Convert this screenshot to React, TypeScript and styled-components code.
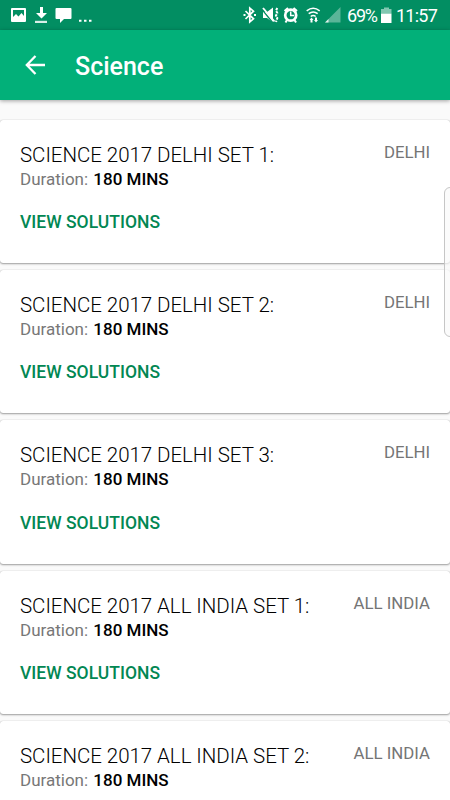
import React from "react";
import styled, { createGlobalStyle } from "styled-components";

const GlobalStyle = createGlobalStyle`
  * { box-sizing: border-box; }
  body { margin: 0; background: #fafafa; overflow: hidden; }
`;

const Screen = styled.div`
  position: relative;
  width: 450px;
  height: 800px;
  overflow: hidden;
  background: #fafafa;
  font-family: Roboto, "Liberation Sans", sans-serif;
  color: #000;
`;

const StatusBar = styled.header`
  display: flex;
  justify-content: space-between;
  height: 30px;
  background: #028e62;
  color: #fff;
`;

const StatusIcon = styled.svg`
  display: block;
  flex: none;
  height: 30px;
`;

const StatusReadout = styled.div`
  display: flex;
  align-items: center;
  padding-right: 12px;
`;

const StatusText = styled.span<{ $width: number; $spacing?: number }>`
  width: ${(p) => p.$width}px;
  font-size: 18px;
  line-height: 32px;
  height: 30px;
  letter-spacing: ${(p) => p.$spacing ?? 0}px;
  white-space: nowrap;
`;

const AppBar = styled.div`
  position: relative;
  display: flex;
  align-items: center;
  height: 70px;
  padding: 2px 0 0 25px;
  background: #02b079;
  box-shadow: 0 1px 4px rgba(0, 0, 0, 0.36);
`;

const BackArrow = styled.svg`
  width: 21px;
  height: 20px;
  margin-top: -3px;
`;

const PageTitle = styled.h1`
  margin: 2px 0 0 29px;
  color: #fff;
  font-size: 25px;
  font-weight: 500;
  line-height: 30px;
`;

const CardList = styled.main`
  display: flex;
  flex-direction: column;
  gap: 7px;
  padding-top: 19.8px;
`;

const Card = styled.article`
  flex: none;
  height: 143.3px;
  padding: 21px 20px 0;
  border-radius: 3px;
  background: #fff;
  box-shadow: 0 1px 2px rgba(0, 0, 0, 0.36), 0 0 1px rgba(0, 0, 0, 0.3);
`;

const CardHeader = styled.div`
  display: flex;
  justify-content: space-between;
  height: 27px;
`;

const PaperTitle = styled.h2`
  margin: 0;
  font-size: 20.5px;
  font-weight: 350;
  letter-spacing: -0.04px;
  line-height: 28px;
  white-space: nowrap;
`;

const Region = styled.span`
  color: #757575;
  font-size: 16.8px;
  font-weight: 450;
  line-height: 23px;
`;

const Duration = styled.p`
  margin: 0;
  color: #777;
  font-size: 17px;
  line-height: 23px;
`;

const Minutes = styled.strong`
  margin-left: 1px;
  color: #000;
  font-weight: 550;
`;

const SolutionsLink = styled.a`
  display: block;
  margin-top: 20.3px;
  color: #028753;
  font-size: 17.5px;
  font-weight: 550;
  letter-spacing: 0.02px;
  line-height: 23px;
`;

const EdgeHandle = styled.div`
  position: absolute;
  top: 187px;
  right: -2px;
  width: 8px;
  height: 150px;
  border: 1px solid #c6c6c6;
  border-radius: 6px 0 0 6px;
  background: rgba(250, 250, 250, 0.7);
`;

const papers = [
  { title: "SCIENCE 2017 DELHI SET 1:", region: "DELHI" },
  { title: "SCIENCE 2017 DELHI SET 2:", region: "DELHI" },
  { title: "SCIENCE 2017 DELHI SET 3:", region: "DELHI" },
  { title: "SCIENCE 2017 ALL INDIA SET 1:", region: "ALL INDIA" },
  { title: "SCIENCE 2017 ALL INDIA SET 2:", region: "ALL INDIA" },
];

function NotificationIcons() {
  return (
    <StatusIcon width="96" viewBox="0 0 96 30" fill="#fff">
      <path fillRule="evenodd" d="M12 8h13a1 1 0 0 1 1 1v12a1 1 0 0 1-1 1H12a1 1 0 0 1-1-1V9a1 1 0 0 1 1-1Zm1 2v7l3-3 2.500 2.500L21.500 13l2.500 3v-6Z" />
      <path d="M40 7h3v6h4l-5.500 5.500L36 13h4Z" />
      <path opacity=".85" d="M35 20.800h12V23H35Z" />
      <path d="M56.500 8h14a1 1 0 0 1 1 1v9a1 1 0 0 1-1 1H64l-4 4v-4h-3.500a1 1 0 0 1-1-1V9a1 1 0 0 1 1-1Z" />
      <path d="M79 19.800h2.500v2H79Zm5 0h2.500v2H84Zm5 0h2.500v2H89Z" />
    </StatusIcon>
  );
}

function SystemIcons() {
  return (
    <StatusIcon width="104" viewBox="0 0 104 30" fill="none" stroke="#fff" strokeWidth="1.700">
      <path d="m2.500 11 8 7.800-3.700 3.200V8l3.700 3.200-8 7.800" />
      <path d="M.5 14h2v2h-2Zm10.500 0h2v2h-2Z" fill="#fff" stroke="none" />
      <path d="M20 12h4l6-4.500v15L24 18h-4Z" fill="#fff" stroke="none" />
      <path d="m19 9.500 11 13.500" stroke="#028e62" strokeWidth="1.200" />
      <path d="m20 8 11.500 13.500" strokeWidth="1.900" />
      <path d="m34.300 8-1.300 2.500 1.300 2.500-1.300 2.500 1.300 2.500-1.300 4" strokeWidth="2" strokeDasharray="2.500 1" />
      <circle cx="47.700" cy="15.200" r="5.500" strokeWidth="2.700" />
      <path d="M47.700 11.500v4h3.500" strokeWidth="1.500" />
      <path d="M41.500 11 45 8m9 3-3.500-3M44 20l-1.500 2.500M51.500 20l1.500 2.500" strokeWidth="2" />
      <path d="M63.700 10.800q6.500-5 13 0M65.700 13.700q4.500-3.500 9 0M67.700 16.500q2.500-2 5 0" strokeWidth="1.600" />
      <path d="m66.500 20 2-2.500 2 2.500h-1v2.500h-2V20Zm4.500 0h1v-2.500h2V20h1l-2 2.500Z" fill="#fff" stroke="none" />
      <path d="M97.500 7v15.500H82Z" fill="#fff" opacity=".35" stroke="none" />
      <path d="M85.500 19v3.500H82Z" fill="#fff" opacity=".8" stroke="none" />
    </StatusIcon>
  );
}

export default function App() {
  return (
    <>
      <GlobalStyle />
      <Screen>
        <StatusBar>
          <NotificationIcons />
          <StatusReadout>
            <SystemIcons />
            <StatusText $width={34} $spacing={-1.2}>69%</StatusText>
            <StatusIcon width="15" viewBox="0 0 15 30" fill="#fff">
              <path opacity=".5" d="M3 7.500h5V9h2.500v4.500H0V9h3Z" />
              <path d="M0 13.500h10.500V23H0Z" />
            </StatusIcon>
            <StatusText $width={42} $spacing={-0.75}>11:57</StatusText>
          </StatusReadout>
        </StatusBar>
        <AppBar>
          <BackArrow viewBox="0 0 21 20" fill="none" stroke="#fff" strokeWidth="2.300">
            <path d="M10.500 1 1.800 10l8.700 9M2 10h18" />
          </BackArrow>
          <PageTitle>Science</PageTitle>
        </AppBar>
        <CardList>
          {papers.map((paper) => (
            <Card key={paper.title}>
              <CardHeader>
                <PaperTitle>{paper.title}</PaperTitle>
                <Region>{paper.region}</Region>
              </CardHeader>
              <Duration>
                Duration: <Minutes>180 MINS</Minutes>
              </Duration>
              <SolutionsLink>VIEW SOLUTIONS</SolutionsLink>
            </Card>
          ))}
        </CardList>
        <EdgeHandle />
      </Screen>
    </>
  );
}
